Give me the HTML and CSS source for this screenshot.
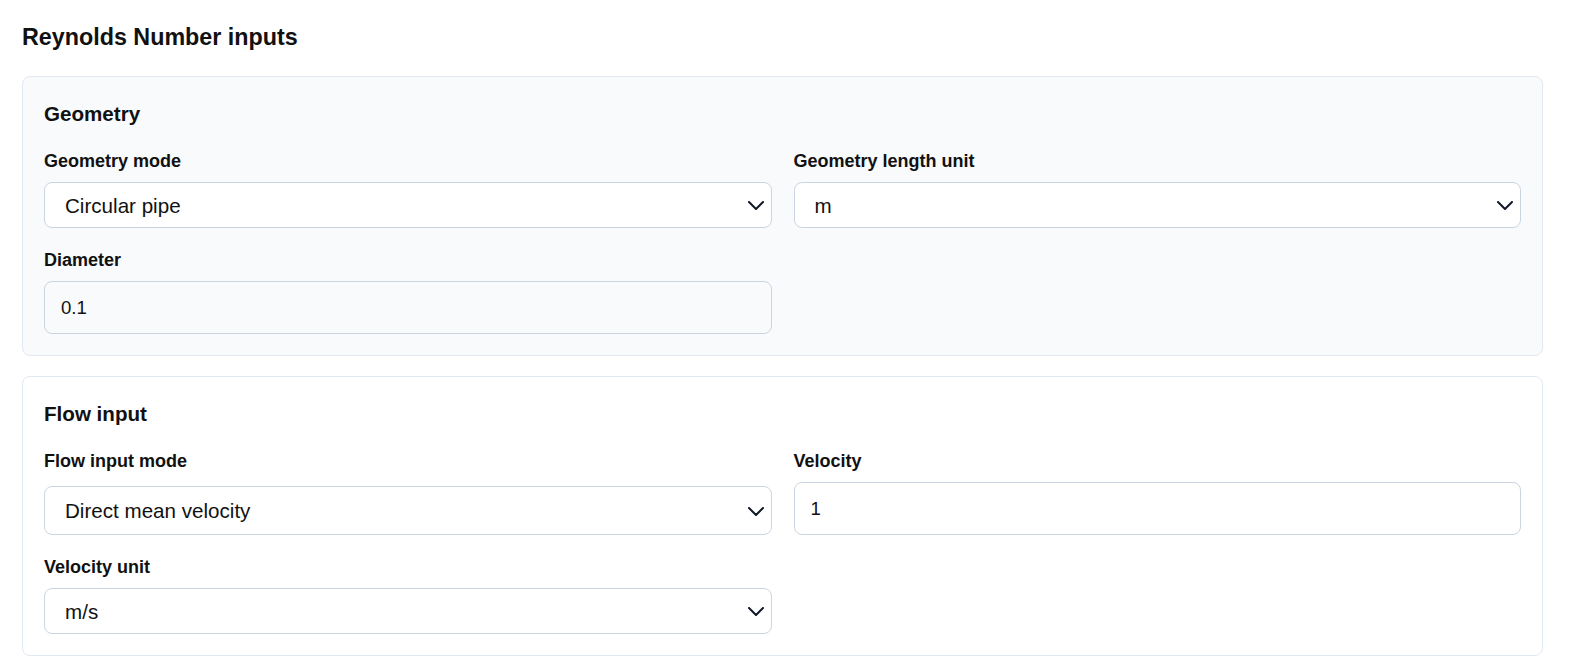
FILE: index.html
```html
<!DOCTYPE html>
<html lang="en">
<head>
    <meta charset="UTF-8">
    <meta name="viewport" content="width=device-width, initial-scale=1.0">
    <title>Reynolds Number inputs</title>
    <link rel="stylesheet" href="styles.css">
</head>
<body>
    <h2 class="page-title">Reynolds Number inputs</h2>

    <!-- Geometry -->
    <section class="card card-muted">
        <h3 class="card-title">Geometry</h3>
        <div class="field-grid">
            <div class="field">
                <label for="geometryMode">Geometry mode</label>
                <div class="select-wrap">
                    <select id="geometryMode">
                        <option>Circular pipe</option>
                        <option>Rectangular duct</option>
                        <option>Hydraulic diameter</option>
                    </select>
                    <svg class="chevron" viewBox="0 0 16 9" aria-hidden="true"><path d="M1 1l7 7 7-7"/></svg>
                </div>
            </div>
            <div class="field">
                <label for="geometryUnit">Geometry length unit</label>
                <div class="select-wrap">
                    <select id="geometryUnit">
                        <option>m</option>
                        <option>cm</option>
                        <option>mm</option>
                        <option>in</option>
                        <option>ft</option>
                    </select>
                    <svg class="chevron" viewBox="0 0 16 9" aria-hidden="true"><path d="M1 1l7 7 7-7"/></svg>
                </div>
            </div>
            <div class="field">
                <label for="diameter">Diameter</label>
                <input id="diameter" type="text" value="0.1">
            </div>
        </div>
    </section>

    <!-- Flow input -->
    <section class="card">
        <h3 class="card-title">Flow input</h3>
        <div class="field-grid">
            <div class="field">
                <label for="flowMode">Flow input mode</label>
                <div class="select-wrap select-bottom">
                    <select id="flowMode" class="select-tall">
                        <option>Direct mean velocity</option>
                        <option>Volumetric flow rate</option>
                        <option>Mass flow rate</option>
                    </select>
                    <svg class="chevron" viewBox="0 0 16 9" aria-hidden="true"><path d="M1 1l7 7 7-7"/></svg>
                </div>
            </div>
            <div class="field">
                <label for="velocity">Velocity</label>
                <input id="velocity" type="text" value="1">
            </div>
            <div class="field">
                <label for="velocityUnit">Velocity unit</label>
                <div class="select-wrap">
                    <select id="velocityUnit">
                        <option>m/s</option>
                        <option>ft/s</option>
                        <option>km/h</option>
                    </select>
                    <svg class="chevron" viewBox="0 0 16 9" aria-hidden="true"><path d="M1 1l7 7 7-7"/></svg>
                </div>
            </div>
        </div>
    </section>
</body>
</html>
```

FILE: styles.css
```css
body {
    margin: 0;
    padding: 0 26px 20px 22px;
    font-family: "Liberation Sans", Arial, sans-serif;
    color: #111111;
    background-color: #ffffff;
}

.page-title {
    margin: 23px 0 25px;
    font-size: 23.3px;
    line-height: 28px;
    font-weight: 700;
}

/* cards */
.card {
    border: 1px solid #e2e8f0;
    border-radius: 8px;
    padding: 25px 21px 21px;
    background-color: #ffffff;
}

.card + .card {
    margin-top: 20px;
}

.card-muted {
    background-color: #f8fafc;
}

.card-title {
    margin: 0 0 25px;
    font-size: 20.6px;
    line-height: 24px;
    font-weight: 700;
}

/* fields */
.field-grid {
    display: grid;
    grid-template-columns: 1fr 1fr;
    gap: 22px;
}

.field {
    display: flex;
    flex-direction: column;
    gap: 10px;
    min-width: 0;
}

.field label {
    font-size: 18px;
    line-height: 21px;
    font-weight: 700;
    color: #111111;
}

.select-wrap {
    position: relative;
}

.select-bottom {
    margin-top: auto;
}

select {
    -webkit-appearance: none;
    appearance: none;
    display: block;
    width: 100%;
    height: 46px;
    margin: 0;
    padding: 0 48px 0 20px;
    border: 1px solid #cbd5e1;
    border-radius: 8px;
    background-color: #ffffff;
    font-family: inherit;
    font-size: 20.6px;
    color: #111111;
}

select.select-tall {
    height: 49px;
}

.chevron {
    position: absolute;
    top: 50%;
    right: 8px;
    width: 16px;
    height: 9px;
    margin-top: -4px;
    fill: none;
    stroke: #111827;
    stroke-width: 2;
    stroke-linecap: round;
    stroke-linejoin: round;
    pointer-events: none;
}

input {
    display: block;
    width: 100%;
    box-sizing: border-box;
    height: 53px;
    margin: 0;
    padding: 0 16px;
    border: 1px solid #cbd5e1;
    border-radius: 8px;
    background-color: transparent;
    font-family: inherit;
    font-size: 18.6px;
    color: #111111;
}
```
